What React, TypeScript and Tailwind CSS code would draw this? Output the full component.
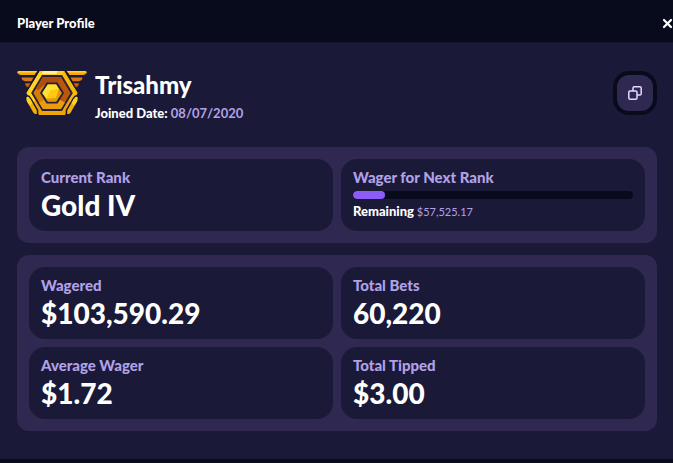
import { ReactNode } from 'react';

interface StatCardProps {
    label: string;
    children: ReactNode;
}

function StatCard({ label, children }: StatCardProps) {
    return (
        <div className="h-[72px] rounded-2xl bg-[#1a1a38] px-3 pt-2">
            <h3 className="text-[15px] leading-5 font-black text-[#b1a1e6]">{label}</h3>
            {children}
        </div>
    );
}

function StatValue({ children }: { children: ReactNode }) {
    return <p className="text-[28px] leading-9 font-black text-white">{children}</p>;
}

function WingLeft() {
    return (
        <g>
            <path d="M1.500 1H20l-2.500 4H4C2 5 .3 3.500 .3 2.300Q.3 1 1.500 1Z" fill="#f5a90c" />
            <path d="M2 1h18l-.8 1.500H.5Z" fill="#ffd42e" />
            <path d="M5 7.500h11.500l-2.200 3.800H8Q5 10.500 4.500 8.500Z" fill="#d97812" />
            <path d="M8.500 13.300h5l-2.500 4.200Q8.500 16 8 14Z" fill="#c7620f" />
        </g>
    );
}

function BracketLeft() {
    return (
        <g>
            <path
                d="M9.500 28Q9.800 26.300 11.500 27L13.500 29.500 19.800 40.500V43.500Q18 45 16.300 42.500L9.800 31Z"
                fill="#f3ae0c"
                stroke="#1a1a32"
                strokeWidth="3"
                paintOrder="stroke"
            />
            <path d="M9.500 28Q9.800 26.300 11.500 27L13.500 29.500 15.500 33 12.500 35.500 9.800 31Z" fill="#ffd128" />
        </g>
    );
}

function RankBadge() {
    return (
        <svg viewBox="0 0 70 46" className="h-[46px] w-[70px] shrink-0" role="img" aria-label="Gold rank">
            <WingLeft />
            <g transform="translate(70 0) scale(-1 1)">
                <WingLeft />
            </g>
            <path d="M21.500.500h27L62 23 49.500 45.500h-29L8 23Z" fill="#1a1a32" />
            <path d="M23 1h24l13.500 22L48 45H22L9.500 23Z" fill="#eca50a" />
            <path d="M23 1h24l2.500 4.500h-29Z" fill="#ffcb20" />
            <path d="M26 1h15l-2 3H25Z" fill="#fff0a0" />
            <path d="M22.800 1.300 9.500 23l6 10 3-3-4.300-7L25 5Z" fill="#ffd31f" />
            <path d="M47.200 1.300 60.500 23l-6 10-3-3 4.300-7L45 5Z" fill="#f8b80c" />
            <BracketLeft />
            <g transform="translate(70 0) scale(-1 1)">
                <BracketLeft />
            </g>
            <path d="M25 5h20L55.800 23 45 41H25L14.200 23Z" fill="#292137" />
            <path d="M26 7h18L53.500 23 44 39H26L16.500 23Z" fill="#ba570c" />
            <path d="M26 7 16.500 23 26 39h8V23Z" fill="#d47c0d" />
            <path d="M26 7h18l-3.500 6h-11L21 20l-2-1Z" fill="#ad4e10" />
            <path d="M26 39h18l4-6.500-5-2.500H27l-5 2.500Z" fill="#e99c12" />
            <path d="M29.500 12.500h11L47 23l-6.500 10.500h-11L23 23Z" fill="#292137" />
            <path d="M30.800 14.500h8.400L44.700 23 39.200 31.500h-8.400L25.300 23Z" fill="#f8b90d" />
            <path d="M30.800 14.500h8.400l2.800 4.700-8 1.300-4.500 8L25.300 23Z" fill="#ffe034" />
            <path d="M34 20.500 42 19.200l-3 8.800-9.500 1Z" fill="#ffc70f" />
            <path d="m42 19.200 2.700 3.800-5.500 8.500h-8.400L29.500 29l9.500-1Z" fill="#e7970b" />
        </svg>
    );
}

function ProfileHeader() {
    return (
        <section className="flex items-center justify-between">
            <div className="flex items-center gap-2">
                <RankBadge />
                <div className="pt-2">
                    <h2 className="text-2xl leading-7 font-black text-white">Trisahmy</h2>
                    <p className="mt-1 text-[13px] leading-5 font-bold text-[#b1a1e6]">
                        <strong className="font-black text-white">Joined Date:</strong> 08/07/2020
                    </p>
                </div>
            </div>
            <button
                type="button"
                aria-label="Copy profile"
                className="flex size-11 items-center justify-center rounded-2xl border-4 border-[#080b1c] bg-[#2f2850] text-[#e3daff]"
            >
                <svg viewBox="0 0 14 14" className="size-[14px]" fill="none" stroke="currentColor" strokeWidth="1.500">
                    <rect x="0.800" y="5" width="8.200" height="8.200" rx="1.300" />
                    <path d="M5 5V2.100Q5 .8 6.300.8H11.900Q13.200.8 13.200 2.100V7.700Q13.200 9 11.900 9H9" />
                </svg>
            </button>
        </section>
    );
}

export default function App() {
    const progress = 11.5;

    return (
        <div className="min-h-screen overflow-x-hidden bg-[#080b1c] font-['Lato',sans-serif]">
            <header className="flex h-[43px] items-center justify-between border-b border-[#11132a] pt-1 pl-[17px]">
                <h1 className="text-[13px] leading-5 font-black text-white">Player Profile</h1>
                <button type="button" aria-label="Close" className="flex h-5 w-[11px] items-center text-white">
                    <svg viewBox="0 0 11 11" className="size-[11px]" stroke="currentColor" strokeWidth="2.200" strokeLinecap="round">
                        <path d="m2 2 7 7M9 2 2 9" />
                    </svg>
                </button>
            </header>

            <main className="bg-[#1a1a38] pt-5 pr-4 pb-7 pl-[17px]">
                <ProfileHeader />

                <section className="mt-6 grid grid-cols-2 gap-2 rounded-xl bg-[#2f2850] p-3">
                    <StatCard label="Current Rank">
                        <StatValue>Gold IV</StatValue>
                    </StatCard>
                    <StatCard label="Wager for Next Rank">
                        <div
                            role="progressbar"
                            aria-label="Wager for Next Rank"
                            aria-valuenow={progress}
                            className="mt-1 h-2 overflow-hidden rounded-full bg-[#080b1c]"
                        >
                            <div className="h-full rounded-full bg-[#8b5cf6]" style={{ width: `${progress}%` }} />
                        </div>
                        <p className="mt-1 text-[11px] leading-4 text-[#b1a1e6]">
                            <strong className="text-[13px] font-black text-white">Remaining</strong> $57,525.17
                        </p>
                    </StatCard>
                </section>

                <section className="mt-3 grid grid-cols-2 gap-2 rounded-xl bg-[#2f2850] p-3">
                    <StatCard label="Wagered">
                        <StatValue>$103,590.29</StatValue>
                    </StatCard>
                    <StatCard label="Total Bets">
                        <StatValue>60,220</StatValue>
                    </StatCard>
                    <StatCard label="Average Wager">
                        <StatValue>$1.72</StatValue>
                    </StatCard>
                    <StatCard label="Total Tipped">
                        <StatValue>$3.00</StatValue>
                    </StatCard>
                </section>
            </main>
        </div>
    );
}
